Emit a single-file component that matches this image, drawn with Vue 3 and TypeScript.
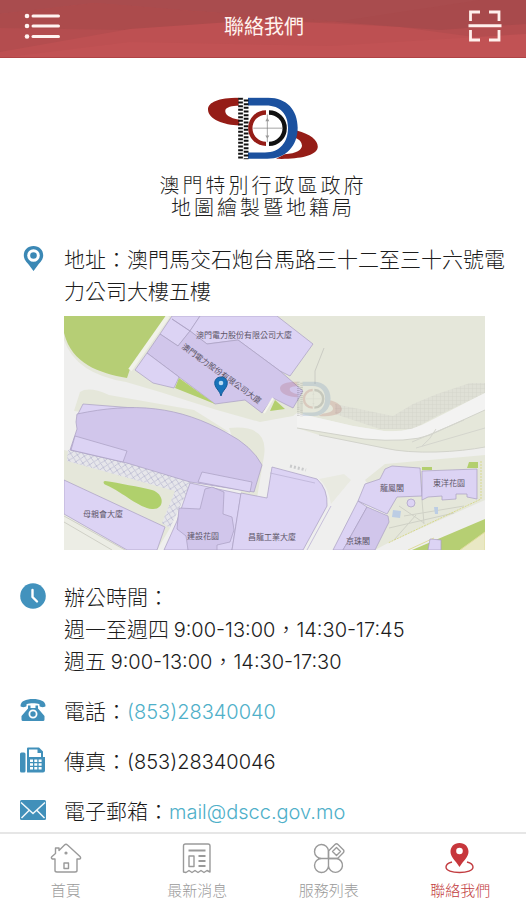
<script setup lang="ts">
interface Tab {
  id: string
  label: string
}

interface MapLabel {
  text: string
  x: number
  y: number
}

const tabs: Tab[] = [
  { id: 'home', label: '首頁' },
  { id: 'news', label: '最新消息' },
  { id: 'services', label: '服務列表' },
  { id: 'contact', label: '聯絡我們' },
]

const activeTab = 'contact'

const mapLabels: MapLabel[] = [
  { text: '澳門電力股份有限公司大廈', x: 180, y: 22 },
  { text: '母親會大廈', x: 39, y: 201 },
  { text: '建設花園', x: 139, y: 223 },
  { text: '昌龍工業大廈', x: 208, y: 224 },
  { text: '龍鳳閣', x: 328, y: 175 },
  { text: '東洋花園', x: 385, y: 170 },
  { text: '京珠閣', x: 294, y: 228 },
]
</script>

<template>
  <div class="app">
    <header class="bar">
      <svg class="bar-art" viewBox="0 0 526 58" preserveAspectRatio="none" aria-hidden="true">
        <rect width="526" height="58" fill="#b44d4f" />
        <path d="M0 0H526V5L340 22L180 10L95 3L0 14Z" fill="#a94c4e" />
        <path d="M95 3L180 10L340 22L220 24L130 30L0 28V14Z" fill="#ac4b4c" />
        <path d="M0 58V52L130 29L260 20L400 27L526 44V58Z" fill="#bd5052" />
        <path d="M0 58L130 42L330 46L526 34V58Z" fill="#c15254" />
        <path d="M335 22L480 0H526V24L440 30Z" fill="#a84a4c" />
        <path d="M0 57.500H526" stroke="#b04345" />
      </svg>
      <button class="bar-btn" type="button" aria-label="選單">
        <svg width="36" height="28" viewBox="0 0 36 28">
          <g fill="#fff3f0">
            <circle cx="3" cy="4" r="2.300" /><circle cx="3" cy="14" r="2.300" /><circle cx="3" cy="24.500" r="2.300" />
            <rect x="7.500" y="2.500" width="28.500" height="3" rx="1.500" />
            <rect x="7.500" y="12.500" width="28.500" height="3" rx="1.500" />
            <rect x="7.500" y="23" width="28.500" height="3" rx="1.500" />
          </g>
        </svg>
      </button>
      <h1 class="bar-title">聯絡我們</h1>
      <button class="bar-btn" type="button" aria-label="掃描">
        <svg width="34" height="32" viewBox="0 0 34 32">
          <path d="M2.500 11V2H12M21 2H31V11M2.500 20V30H12M21 30H31V20" fill="none" stroke="#fff0ec" stroke-width="2.800" />
          <path d="M.500 15.700H33.500" stroke="#fff0ec" stroke-width="3" />
        </svg>
      </button>
    </header>

    <main class="content">
      <div class="agency">
        <svg class="agency-logo" viewBox="174 36 330 188" aria-hidden="true">
          <defs>
            <symbol id="emblem" viewBox="174 36 330 188">
              <path d="M266 38C205 38 174 52 174 73C174 102 222 120 268 121V104C238 98 224 88 226 75C228 66 246 62 266 62Z" fill="#951d17" />
              <path d="M440 136C485 148 506 168 503 188C498 214 440 223 378 221L404 207C440 205 456 194 456 181C455 170 448 163 436 158Z" fill="#951d17" />
              <path d="M294 38H355C410 38 443 75 443 128C443 182 408 221 352 221H294V202H345C390 202 414 172 414 128C414 88 392 61 348 61H294Z" fill="#1b519f" />
              <path d="M272 38V222M288 43V222" stroke="#111" stroke-width="15" stroke-dasharray="6 5" />
              <path d="M280 38V222" stroke="#fff" stroke-width="2" />
              <path d="M348 82A47 47 0 0 0 348 176" fill="none" stroke="#951d17" stroke-width="13" />
              <path d="M357 82A47 47 0 0 1 357 176" fill="none" stroke="#111" stroke-width="13" />
              <path d="M310 129H396M352 88V171" stroke="#777" stroke-width="2" />
              <path d="M346 108L352 98L358 108ZM346 151L352 161L358 151Z" fill="#999" />
            </symbol>
          </defs>
          <use href="#emblem" x="174" y="36" width="330" height="188" />
        </svg>
        <p class="agency-name">澳門特別行政區政府<br />地圖繪製暨地籍局</p>
      </div>

      <section class="row row-address">
        <span class="row-icon">
          <svg width="25" height="25" viewBox="0 0 25 25" aria-hidden="true">
            <path d="M12.500 0C6.700 0 2.800 4 2.800 9.300C2.800 13.500 5.500 16 8 19L12.500 25L17 19C19.500 16 22.200 13.500 22.200 9.300C22.200 4 18.300 0 12.500 0Z" fill="#3b88b5" />
            <circle cx="12.500" cy="9.500" r="6.300" fill="#fff" />
            <circle cx="12.500" cy="9.500" r="3.300" fill="#3b88b5" />
          </svg>
        </span>
        <div>
          <p>地址：澳門馬交石炮台馬路三十二至三十六號電力公司大樓五樓</p>
          <svg class="map" viewBox="0 0 421 234" role="img" aria-label="地圖">
            <defs>
              <pattern id="hatch" width="7" height="7" patternUnits="userSpaceOnUse" patternTransform="rotate(12)">
                <rect width="7" height="7" fill="#e6e6ea" />
                <path d="M0 0L7 7M7 0L0 7" stroke="#b9b9d0" stroke-width=".8" />
              </pattern>
              <pattern id="dots" width="4" height="4" patternUnits="userSpaceOnUse">
                <rect width="4" height="4" fill="#dfe0d6" />
                <path d="M0 0H4M0 0V4" stroke="#d0d1c8" stroke-width=".7" />
              </pattern>
            </defs>
            <rect width="421" height="234" fill="#efefee" />
            <path d="M0 0H421V77L386 95L366 105Q346 117 320 115L289 110L233 97L229 100L196 106L153 94L96 76L62 66Q12 58 0 24Z" fill="#e5e7da" />
            <path d="M0 0H102L66 53L63 62C35 57 8 48 0 17Z" fill="#b6ce75" />
            <path d="M104 0L66 54" stroke="#f1f2e9" stroke-width="4" />
            <path d="M16 76Q25 70 45 79L130 94L165 116L10 95Z" fill="#e5e7da" />
            <path d="M165 112Q205 108 200 140L193 182L177 178L178 150Z" fill="#e5e7da" />

            <g stroke="#a99fc2" stroke-width=".7">
              <path d="M108 0H136L126 15L114 30L96 18Z" fill="#dcd3f4" />
              <path d="M108 3L126 15L136 0H213L249 28L226 60L216 55L174 24L143 28L126 15Z" fill="#dcd3f4" />
              <path d="M96 18L114 30L126 15L143 28L174 24L216 55L239 75L229 92L209 82L198 97L181 84L151 88L83 37Z" fill="#d1c6eb" />
              <path d="M83 37L71 54L89 67L110 72L115 61Z" fill="#dcd3f4" />
            </g>
            <path d="M115 62L151 88L111 72ZM206 95L211 84L221 93Z" fill="#b3cf6e" />
            <path d="M200 97L209 82" fill="none" stroke="#f4f5ec" stroke-width="2" />

            <path d="M260 32L251 55V68" fill="none" stroke="#cbccc4" />
            <path d="M271 88L329 100L349 88L373 78L406 67H421V77L373 100L349 113H316L271 98Z" fill="url(#dots)" />
            <path d="M233 97L289 110L320 115Q346 117 366 105L421 77V94L366 120Q340 128 300 123L233 112Z" fill="#f3f3f2" />
            <path d="M233 112L300 123Q345 127 366 119L421 94V131C395 136 350 139 320 132L255 119Z" fill="#e5e7da" />
            <path d="M233 112L300 123Q345 127 366 119L421 94M421 131C395 136 350 139 320 132L255 119" fill="none" stroke="#d2d3cb" />
            <path d="M348 126L400 104M352 132L421 112M372 113Q366 124 358 130" fill="none" stroke="#d4d5cd" />

            <path d="M19 88L70 92L13 100Z" fill="#dcd3f4" stroke="#a99fc2" stroke-width=".7" />
            <path d="M0 134L126 164L106 212L93 234H0Z" fill="#e5e7da" />
            <path d="M0 196L68 234H0Z" fill="#ecede5" />
            <path d="M0 200L61 234M0 206L48 234" fill="none" stroke="#cfd0c6" />
            <path d="M4 134L63 146L128 165L106 212L98 207L111 175L3 145Z" fill="url(#hatch)" />
            <path d="M41 165C55 167 75 171 88 174C101 178 101 194 88 193C75 192 60 177 42 169C39 168 39 165 41 165Z" fill="#b0d06c" />

            <g stroke="#a99fc2" stroke-width=".7">
              <path d="M13 98C70 86 115 90 163 117Q188 130 198 149L190 176L126 166L63 147L6 134L13 113L12 106Z" fill="#d1c6eb" />
              <path d="M11 120L63 135L59 146L7 134Z" fill="#dcd3f4" />
              <path d="M138 156L188 166L186 176L134 166Z" fill="#dcd3f4" />
              <path d="M0 164L101 211L93 234H63L0 198Z" fill="#dcd3f4" />
              <path d="M126 167L177 178L168 234H100L113 205Z" fill="#dcd3f4" />
              <path d="M141 173L148 171L160 176L159 198L168 201L170 214L166 226L153 229V234H124L122 220L113 213L115 192L136 193Z" fill="#d1c6eb" />
              <path d="M177 177L203 182L208 151L253 163Q264 173 263 190L239 234H168Z" fill="#dcd3f4" />
            </g>
            <path d="M206 157L251 167M267 190L243 234" fill="none" stroke="#bdb4d5" stroke-width=".8" />
            <path d="M226 150L242 154" stroke="#c9cacb" stroke-width="3" stroke-dasharray="2 2" />
            <path d="M255 163L280 158L287 164L267 188Q264 170 255 163Z" fill="#e9eae1" />

            <path d="M301 164L321 148L421 139V184L324 227L311 234L323 198Z" fill="#e5e7da" />
            <path d="M348 234L421 203V234Z" fill="#b6cf73" />
            <path d="M396 234L421 216V234M344 234L370 222" fill="#e9e8c4" stroke="#dfdc9c" />
            <path d="M340 200L400 190M325 212L390 197M330 224L352 199M358 184L360 208M335 190L360 207" fill="none" stroke="#cfd1c6" />
            <path d="M417 145V183L324 227" fill="none" stroke="#d8d98e" stroke-dasharray="2 1" />
            <path d="M358 154H368V151H358ZM403 152L405 146H414V152Z" fill="#b3cf6e" />
            <g stroke="#a99fc2" stroke-width=".7">
              <path d="M321 153L328 150L356 152L358 180L333 181L323 198L294 185L301 168L316 163Z" fill="#dcd3f4" />
              <path d="M358 155L413 153V183L403 181V178H392V183L378 184V180L364 181L358 184Z" fill="#dcd3f4" />
              <path d="M294 185L303 191L279 234H269Z" fill="#dcd3f4" />
              <path d="M303 191L324 200L325 206L311 234H279Z" fill="#d1c6eb" />
              <path d="M366 223L377 224V234H364Z" fill="#dcd3f4" />
              <circle cx="347" cy="187" r="4" fill="#dcd3f4" />
            </g>
            <path d="M329 194L337 195L336 202L328 201ZM370 191H374V198H371Z" fill="#bccde4" />

            <use href="#emblem" x="216" y="65" width="62" height="36" opacity=".14" />
            <g class="map-text">
              <text v-for="label in mapLabels" :key="label.text" :x="label.x" :y="label.y">{{ label.text }}</text>
              <text transform="translate(156 60) rotate(36)">澳門電力股份有限公司大廈</text>
            </g>
            <path d="M157 61C152 61 150 65 151 69C152 73 156 75 157 80C158 75 162 73 163 69C164 65 162 61 157 61Z" fill="#1973ba" stroke="#145b99" />
            <circle cx="157" cy="67" r="2.300" fill="#b9dcf3" />
          </svg>
        </div>
      </section>

      <section class="row">
        <span class="row-icon">
          <svg width="26" height="26" viewBox="0 0 26 26" aria-hidden="true">
            <circle cx="13" cy="13" r="12.800" fill="#4292bd" />
            <path d="M12.500 7V14L17 18.500" fill="none" stroke="#fff" stroke-width="2.400" stroke-linecap="round" stroke-linejoin="round" />
          </svg>
        </span>
        <p>辦公時間：<br />週一至週四 <span class="latin">9:00-13:00</span>，<span class="latin">14:30-17:45</span><br />週五 <span class="latin">9:00-13:00</span>，<span class="latin">14:30-17:30</span></p>
      </section>

      <section class="row">
        <span class="row-icon">
          <svg width="26" height="24" viewBox="0 0 26 24" aria-hidden="true">
            <path d="M.500 8C.500 3 6 1 13 1S25.500 3 25.500 8C25.500 9.500 20 9.500 19.500 8V6.300C16 5 10 5 6.500 6.300V8C6 9.500.500 9.500.500 8Z" fill="#4190ba" />
            <path d="M8 7.500H10.500V10H15.500V7.500H18V10.500L24.500 18V21.500Q24.500 23 23 23H3Q1.500 23 1.500 21.500V18L8 10.500Z" fill="#4190ba" />
            <circle cx="13" cy="16" r="3.600" fill="none" stroke="#fff" stroke-width="1.800" />
          </svg>
        </span>
        <p>電話：<a class="latin" href="tel:+85328340040">(853)28340040</a></p>
      </section>

      <section class="row">
        <span class="row-icon">
          <svg width="26" height="26" viewBox="0 0 26 26" aria-hidden="true">
            <rect y="5.500" width="5.500" height="20" rx="1.500" fill="#4190ba" />
            <path d="M7 25V1.500Q7 .500 8 .500H19L23 4.500V10H25V23.500Q25 25.500 23 25.500H8Q7 25.500 7 25Z" fill="#4190ba" />
            <path d="M9 2.500H17.500V6H21V10H9Z" fill="#fff" />
            <g fill="#fff">
              <path d="M10 12.500H13V15H10ZM14.300 12.500H17.300V15H14.300ZM18.600 12.500H21.600V15H18.600ZM10 16.300H13V18.800H10ZM14.300 16.300H17.300V18.800H14.300ZM18.600 16.300H21.600V18.800H18.600ZM10 20.100H13V22.600H10ZM14.300 20.100H17.300V22.600H14.300ZM18.600 20.100H21.600V22.600H18.600Z" />
            </g>
          </svg>
        </span>
        <p>傳真：<span class="latin">(853)28340046</span></p>
      </section>

      <section class="row">
        <span class="row-icon">
          <svg width="26" height="22" viewBox="0 0 26 22" aria-hidden="true">
            <rect y="1" width="26" height="20" rx="1.500" fill="#4190ba" />
            <path d="M1 3.500L13 14.500L25 3.500M1.500 19L9 11.500M24.500 19L17 11.500" fill="none" stroke="#f2f8fb" stroke-width="1.500" />
          </svg>
        </span>
        <p>電子郵箱：<a class="latin" href="mailto:mail@dscc.gov.mo">mail@dscc.gov.mo</a></p>
      </section>
    </main>

    <nav class="tabs">
      <a v-for="tab in tabs" :key="tab.id" class="tab" :class="{ active: tab.id === activeTab }" :href="'#' + tab.id">
        <svg width="32" height="32" viewBox="0 0 32 32" fill="none" stroke="currentColor" stroke-width="1.400" stroke-linejoin="round" aria-hidden="true">
          <template v-if="tab.id === 'home'">
            <path d="M5 17H2.500Q.500 16 2 14.500L5.500 11.500V6H9V8.500L14.500 3Q16 1.500 17.500 3L30 14.500Q31.500 16.500 29.500 17H27V28.500Q27 30 25 30H7Q5 30 5 28.500Z" />
            <path d="M14 21H18.500V26.500H14Z" /><circle cx="16" cy="11" r=".9" />
          </template>
          <template v-else-if="tab.id === 'news'">
            <path d="M2.500 30V4Q2.500 2 4.500 2H27Q29 2 29 4V30L26 28.500L23 30.500L20 28.500L17 30.500L14 28.500L11 30.500L8 28.500L5 30.500Z" />
            <path d="M7.500 8.500H24.500M17.500 14H24.500M17.500 19H24.500M17.500 24H24.500" stroke-width="1.800" />
            <path d="M8 14H13V24.500H8Z" />
          </template>
          <template v-else-if="tab.id === 'services'">
            <path d="M15.500 16.500H8.500A7 7 0 1 1 15.500 9V16.500ZM15.500 16.500V24A7 7 0 1 1 8.500 16.500M15.500 16.500H24A7 7 0 1 1 15.500 24" />
            <path d="M15.500 16.500V9L22 2.500Q23.500 1 25 2.500L30.500 8Q31.500 9.500 30 11L24.500 16.500Z" />
            <path d="M23.500 5.500L27.500 9.500L23.500 13.500L19.500 9.500Z" />
          </template>
          <template v-else>
            <path d="M8 20C4.500 21 2 23 2 25C2 28.500 8 30.500 15.500 30.500S29 28.500 29 25C29 23 26.500 21 23 20" />
            <path d="M15.500 1C9.800 1 6.500 5 6.500 9.800C6.500 15 11 18 15.500 25C20 18 24.500 15 24.500 9.800C24.500 5 21.200 1 15.500 1Z" fill="#c7373c" stroke="none" />
            <circle cx="15.500" cy="9" r="3.300" fill="#fff" stroke="none" />
          </template>
        </svg>
        <span>{{ tab.label }}</span>
      </a>
    </nav>
  </div>
</template>

<style>
body {
  background: #fff;
}
</style>

<style scoped>
.app {
  display: flex;
  flex-direction: column;
  min-height: 100vh;
  color: #1c1c1c;
  background: #fff;
  font-family: 'Noto Sans CJK TC', sans-serif;
  font-weight: 300;
}

p,
h1 {
  margin: 0;
}

.bar {
  position: relative;
  display: flex;
  align-items: center;
  justify-content: space-between;
  height: 58px;
  padding: 0 24px 6px;
  box-sizing: border-box;
}

.bar-art {
  position: absolute;
  inset: 0;
  width: 100%;
  height: 100%;
}

.bar-btn {
  position: relative;
  display: flex;
  padding: 0;
  border: 0;
  background: none;
}

.bar-title {
  position: relative;
  color: #fff3ef;
  font-size: 20px;
  font-weight: 400;
  line-height: 32px;
}

.content {
  flex: 1;
  padding: 39px 20px 4px;
}

.agency {
  display: flex;
  flex-direction: column;
  align-items: center;
  gap: 14px;
  margin-bottom: 24px;
}

.agency-logo {
  width: 110px;
  height: 63px;
}

.agency-name {
  font-size: 20px;
  line-height: 22px;
  letter-spacing: 3px;
  text-align: center;
}

.row {
  display: grid;
  grid-template-columns: 26px 1fr;
  column-gap: 18px;
  margin-top: 18px;
  font-size: 21px;
  line-height: 32px;
}

.row-address {
  margin-bottom: 30px;
}

.row-icon {
  display: flex;
  align-items: center;
  justify-content: center;
  height: 32px;
}

.latin {
  font-family: Inter, sans-serif;
  font-size: 20px;
  line-height: 20px;
}

a.latin {
  color: #4fb0c9;
  text-decoration: none;
}

.map {
  display: block;
  width: calc(100% - 21px);
  height: auto;
  margin-top: 10px;
}

.map-text {
  fill: #5d5668;
  font-size: 8px;
  font-weight: 400;
  text-anchor: middle;
}

.tabs {
  position: sticky;
  bottom: 0;
  display: grid;
  grid-template-columns: repeat(4, 1fr);
  border-top: 2px solid #e6e6e6;
  background: #fff;
}

.tab {
  display: flex;
  flex-direction: column;
  align-items: center;
  gap: 6px;
  padding-top: 8px;
  color: #9a9a9a;
  font-size: 15px;
  line-height: 20px;
  text-decoration: none;
}

.tab.active {
  color: #c23c40;
}
</style>
